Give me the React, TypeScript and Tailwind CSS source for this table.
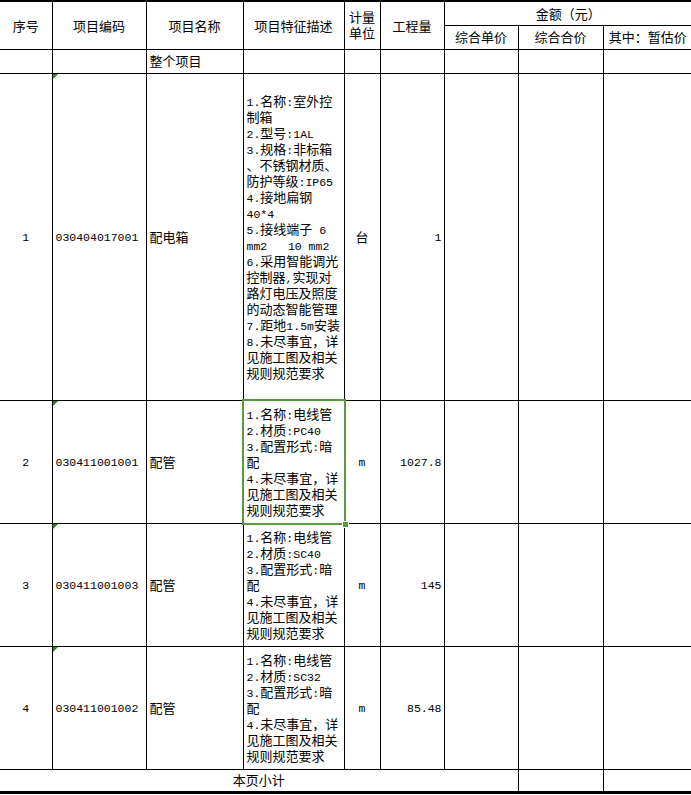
import React from "react"

// half-width runs (digits, latin, colon) get a narrow mono face, like the sheet's SimSun
function Txt({ s }: { s: string }) {
  const parts = s.split(/([\x20-\x7e]+)/)
  return (
    <>
      {parts.map((p, i) =>
        p === "" ? null : /^[\x20-\x7e]+$/.test(p) ? (
          <span key={i} className="font-['Liberation_Mono',monospace] text-[11.5px]">
            {p}
          </span>
        ) : (
          <span key={i}>{p}</span>
        )
      )}
    </>
  )
}

function Lines({ lines }: { lines: string[] }) {
  return (
    <div className="pl-[3px]">
      {lines.map((l, i) => (
        <div key={i} className="h-4 leading-4 whitespace-pre">
          <Txt s={l} />
        </div>
      ))}
    </div>
  )
}

interface Item {
  no: string
  code: string
  name: string
  desc: string[]
  unit: string
  qty: string
  height: string
  selected?: boolean
}

const items: Item[] = [
  {
    no: "1",
    code: "030404017001",
    name: "配电箱",
    desc: [
      "1.名称:室外控",
      "制箱",
      "2.型号:1AL",
      "3.规格:非标箱",
      "、不锈钢材质、",
      "防护等级:IP65",
      "4.接地扁钢",
      "40*4",
      "5.接线端子 6",
      "mm2   10 mm2",
      "6.采用智能调光",
      "控制器,实现对",
      "路灯电压及照度",
      "的动态智能管理",
      "7.距地1.5m安装",
      "8.未尽事宜，详",
      "见施工图及相关",
      "规则规范要求",
    ],
    unit: "台",
    qty: "1",
    height: "h-[327px]",
  },
  {
    no: "2",
    code: "030411001001",
    name: "配管",
    desc: ["1.名称:电线管", "2.材质:PC40", "3.配置形式:暗", "配", "4.未尽事宜，详", "见施工图及相关", "规则规范要求"],
    unit: "m",
    qty: "1027.8",
    height: "h-[123px]",
    selected: true,
  },
  {
    no: "3",
    code: "030411001003",
    name: "配管",
    desc: ["1.名称:电线管", "2.材质:SC40", "3.配置形式:暗", "配", "4.未尽事宜，详", "见施工图及相关", "规则规范要求"],
    unit: "m",
    qty: "145",
    height: "h-[123px]",
  },
  {
    no: "4",
    code: "030411001002",
    name: "配管",
    desc: ["1.名称:电线管", "2.材质:SC32", "3.配置形式:暗", "配", "4.未尽事宜，详", "见施工图及相关", "规则规范要求"],
    unit: "m",
    qty: "85.48",
    height: "h-[123px]",
  },
]

const td = "border border-black p-0 align-middle"

export default function App() {
  return (
    <div className="w-[691px] h-[795px] overflow-hidden bg-white text-black font-['Noto_Sans_CJK_SC',sans-serif] text-[13px]">
      <table className="border-collapse table-fixed w-[692px]">
        <colgroup>
          <col className="w-[52px]" />
          <col className="w-[94px]" />
          <col className="w-[97px]" />
          <col className="w-[101px]" />
          <col className="w-[36px]" />
          <col className="w-[64px]" />
          <col className="w-[74px]" />
          <col className="w-[85px]" />
          <col className="w-[89px]" />
        </colgroup>
        <tbody>
          <tr className="h-6">
            <td rowSpan={2} className={`${td} border-l-0 border-t-2 text-center`}>序号</td>
            <td rowSpan={2} className={`${td} border-t-2 text-center`}>项目编码</td>
            <td rowSpan={2} className={`${td} border-t-2 text-center`}>项目名称</td>
            <td rowSpan={2} className={`${td} border-t-2 text-center`}>项目特征描述</td>
            <td rowSpan={2} className={`${td} border-t-2 text-center leading-4`}>
              计量
              <br />
              单位
            </td>
            <td rowSpan={2} className={`${td} border-t-2 text-center`}>工程量</td>
            <td colSpan={3} className={`${td} border-t-2 border-r-0 text-center`}>金额（元）</td>
          </tr>
          <tr className="h-6">
            <td className={`${td} text-center`}>综合单价</td>
            <td className={`${td} text-center`}>综合合价</td>
            <td className={`${td} border-r-0 text-center`}>其中：暂估价</td>
          </tr>
          <tr className="h-6">
            <td className={`${td} border-l-0`}></td>
            <td className={td}></td>
            <td className={`${td} pl-[3px]`}>整个项目</td>
            <td className={td}></td>
            <td className={td}></td>
            <td className={td}></td>
            <td className={td}></td>
            <td className={td}></td>
            <td className={`${td} border-r-0`}></td>
          </tr>
          {items.map((it) => (
            <tr key={it.code} className={it.height}>
              <td className={`${td} border-l-0 text-center`}>
                <Txt s={it.no} />
              </td>
              <td className={`${td} relative pl-[3px]`}>
                <span className="absolute left-0 top-0 w-0 h-0 border-t-[5px] border-r-[5px] border-t-[#1f8a1f] border-r-transparent" />
                <Txt s={it.code} />
              </td>
              <td className={`${td} pl-[3px]`}>{it.name}</td>
              <td className={`${td} relative`}>
                <Lines lines={it.desc} />
                {it.selected && (
                  <>
                    <span className="absolute inset-[-2px] border-2 border-[#5b9a3e] pointer-events-none" />
                    <span className="absolute right-[-5px] bottom-[-5px] w-[7px] h-[7px] bg-[#5b9a3e] border border-white" />
                  </>
                )}
              </td>
              <td className={`${td} text-center`}>
                <Txt s={it.unit} />
              </td>
              <td className={`${td} text-right pr-[2px]`}>
                <Txt s={it.qty} />
              </td>
              <td className={td}></td>
              <td className={td}></td>
              <td className={`${td} border-r-0`}></td>
            </tr>
          ))}
          <tr className="h-[23px]">
            <td colSpan={7} className={`${td} border-l-0 border-b-[3px] text-center`}>本页小计</td>
            <td className={`${td} border-b-[3px]`}></td>
            <td className={`${td} border-b-[3px] border-r-0`}></td>
          </tr>
        </tbody>
      </table>
    </div>
  )
}
